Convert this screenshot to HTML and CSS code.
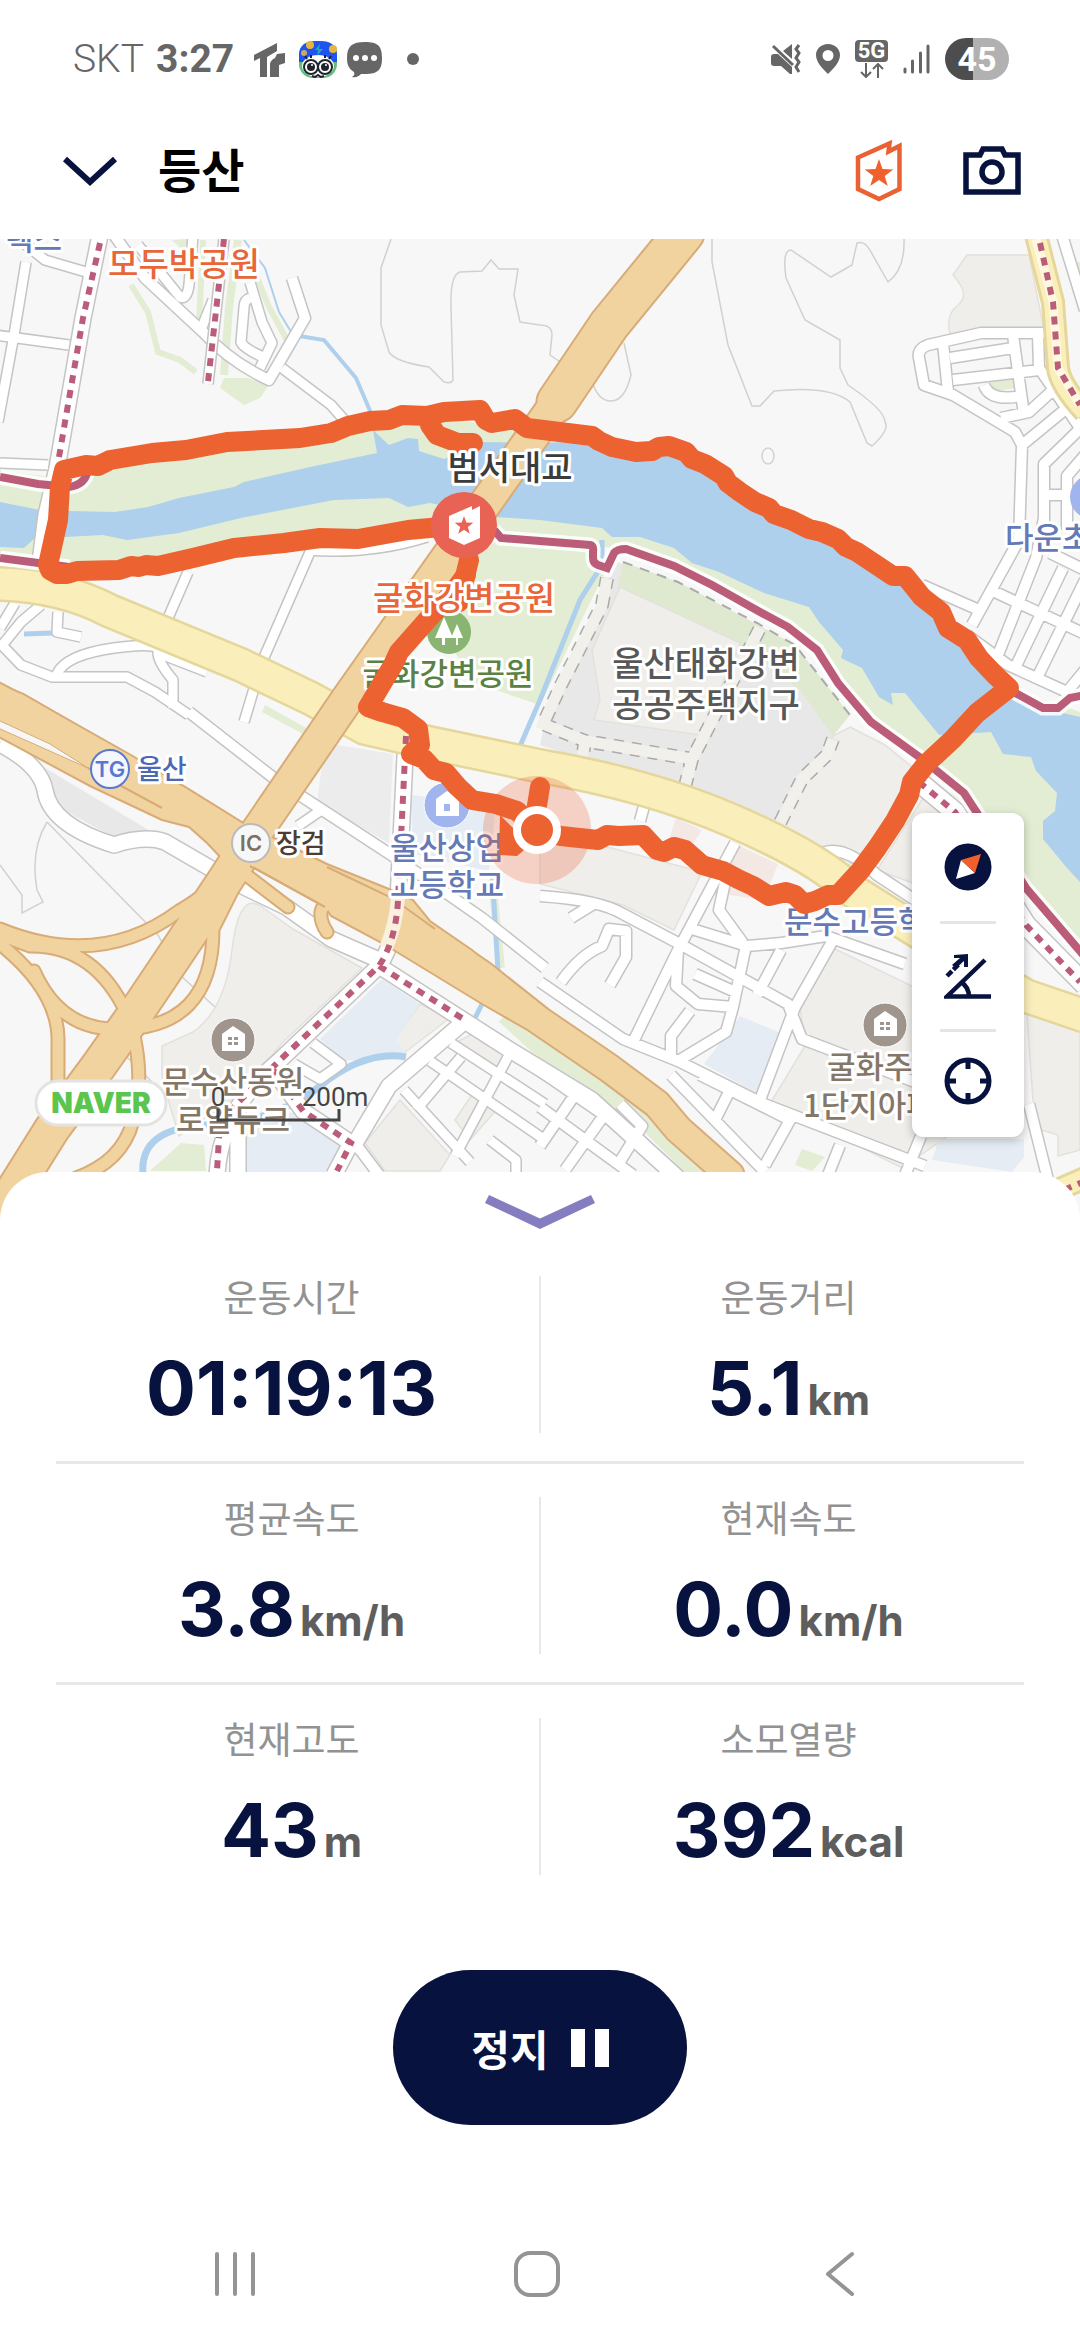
FILE: index.html
```html
<!DOCTYPE html>
<html lang="ko">
<head>
<meta charset="utf-8">
<meta name="viewport" content="width=device-width, initial-scale=1">
<title>등산</title>
<link rel="stylesheet" href="styles.css">
</head>
<body>
<div class="status-bar">
  <div class="status-left">
    <span class="carrier">SKT</span>
    <span class="clock">3:27</span>
    <svg class="app-icon" width="32" height="36" viewBox="0 0 32 36"><path fill="#666" d="M0 14 23 2v8L13 16v20H6V17L0 20zM31 12v10l-6 2v12h-9V24c0-4 3-6 5-7l2-4z"/></svg>
    <svg class="face-icon" width="40" height="38" viewBox="0 0 40 38">
      <rect x="1" y="1" width="38" height="37" rx="14" fill="#62c07a"/>
      <path fill="#1f54ee" d="M1 22V15C1 5 8 1 20 1s19 4 19 14v7z"/>
      <ellipse cx="20" cy="26" rx="16" ry="11" fill="#fff"/>
      <circle cx="12" cy="5" r="4" fill="#e8b53c"/><circle cx="35" cy="9" r="4" fill="#e8b53c"/><circle cx="6" cy="13" r="3" fill="#cda862"/>
      <path d="m22 4-5 6h3l-1 6 6-7h-4z" fill="#27a6b8"/>
      <circle cx="13" cy="27" r="7" fill="#fff" stroke="#20242c" stroke-width="2"/><circle cx="27" cy="27" r="7" fill="#fff" stroke="#20242c" stroke-width="2"/>
      <circle cx="13" cy="27" r="4" fill="#20242c"/><circle cx="27" cy="27" r="4" fill="#20242c"/>
      <circle cx="14" cy="25" r="1" fill="#fff"/><circle cx="28" cy="25" r="1" fill="#fff"/>
      <path d="M14 36l3 1 3-2 3 2 3-1M9 19l-2-3M13 18v-3M27 18v-3M31 19l2-3" stroke="#20242c" stroke-width="2" fill="none"/>
    </svg>
    <svg class="chat-icon" width="36" height="37" viewBox="0 0 36 37"><path fill="#666" d="M18 1c13 0 17 4 17 16s-4 16-17 16h-4c-2 2-5 4-9 3 2-1 3-3 2-5C2 28 0 24 0 17 0 5 5 1 18 1z"/><g fill="#fff"><circle cx="9" cy="17" r="3"/><circle cx="18" cy="17" r="3"/><circle cx="27" cy="17" r="3"/></g></svg>
    <svg class="more-icon" width="12" height="12"><circle cx="6" cy="6" r="6" fill="#666"/></svg>
  </div>
  <div class="status-right">
    <svg width="30" height="32" viewBox="0 0 30 32"><path fill="#666" d="M0 14q0-3 3-3h4l14 13v7h-2l-9-8H3q-3 0-3-3zM12 8l9-7v15z"/><path d="M2 3l20 19M28 2l-3 4 3 4-3 5 3 4-3 5 3 5" fill="none" stroke="#666" stroke-width="3"/></svg>
    <svg width="24" height="32" viewBox="0 0 24 32"><path fill="#666" fill-rule="evenodd" d="M12 1c7 0 12 5 12 11 0 7-6 13-12 19C6 25 0 19 0 12 0 6 5 1 12 1zm0 6a5 5 0 1 0 0 11 5 5 0 0 0 0-11z"/></svg>
    <span class="network"><span class="network-type">5G</span><svg width="24" height="15" viewBox="0 0 24 15"><path d="M6 0v13M1 9l5 5 5-5M18 15V2M13 6l5-5 5 5" fill="none" stroke="#666" stroke-width="2"/></svg></span>
    <svg width="27" height="30" viewBox="0 0 27 30"><path d="M2 25v3M9.500 17v11M17.500 9v19M25 2v26" stroke="#666" stroke-width="3" stroke-linecap="round"/></svg>
    <span class="battery">45</span>
  </div>
</div>

<header class="app-bar">
  <button class="icon-button" type="button" aria-label="접기"><svg width="56" height="32" viewBox="0 0 56 32"><path d="M3 4l25 23L53 4" fill="none" stroke="#07123e" stroke-width="6"/></svg></button>
  <h1>등산</h1>
  <button class="icon-button badge-button" type="button" aria-label="스탬프"><svg width="50" height="64" viewBox="0 0 50 64"><path d="M4 18.500 35.500 4.500 34.500 12.500 45.500 7V50L25 60 4 50z" fill="none" stroke="#ea6233" stroke-width="4.500"/><path fill="#f0602c" d="M25 20l3.500 10.100 10.800.3-8.600 6.500 3.100 10.200L25 41l-8.800 6.100 3.100-10.200-8.600-6.500 10.800-.3z"/></svg></button>
  <button class="icon-button" type="button" aria-label="카메라"><svg width="58" height="50" viewBox="0 0 58 50"><path d="M3 9h14l3-6h19l3 6h13v37H3z" fill="none" stroke="#07123e" stroke-width="5.500"/><circle cx="29" cy="26" r="10" fill="none" stroke="#07123e" stroke-width="5.500"/></svg></button>
</header>

<main>
<section class="map" aria-label="지도">
<svg class="map-canvas" viewBox="0 239 1080 1000" role="img" aria-label="운동 경로 지도">
  <defs>
    <path id="narrow" d="M26 262 14 335-2 422M-5 335 69 345M0 463 48 465M20 240 45 260 86 272M138 245 180 297Q187 300 189 285L193 236M250 282 262 322 272 343 260 368M250 298Q244 300 244 308L241 342Q243 348 265 358M282 368 331 405 346 422M213 300 200 332M188 572 165 625M310 552 262 662 244 722M306 550Q370 555 427 537M0 643 21 665 52 677H127L155 692 189 715M57 674Q65 655 114 648T158 653Q158 662 173 680V708M158 653 207 672M41 605 21 622 0 648M15 603 0 628M58 612 57 632 81 637M298 826 320 811M313 1043 341 1064 320 1079 294 1064M451 1043 545 1104M430 1061 545 1140M404 1090 470 1162M510 1053 455 1156M461 1057 416 1110M490 1140 516 1160V1172"/>
    <path id="medium" d="M114 235 145 278 203 332Q230 362 269 380L305 318 292 278M189 712 275 779 396 858 482 918 545 968M355 1143 379 1175M540 896Q600 900 623 914L678 943 788 1004 802 1039 915 1082M735 843 678 950 633 1042M540 982 623 1039 678 1061 764 1104 925 1166M833 940 795 1007 760 1100M692 929 747 946 781 943 826 936 905 964M678 950 676 986 698 1004 733 1007 745 950M571 918 592 905M561 982Q580 955 602 946L609 929 626 931V957L610 985M733 1007 726 1032 678 1061M690 1011 671 1036V1058M728 868 719 910 743 943M695 974 740 994M647 795 640 821M781 950 757 995M540 1071 640 1140 678 1178M574 1096 540 1146M602 1118 565 1170M540 1107 633 1175M620 1104 642 1126 616 1168M817 856Q840 840 877 875L915 900M671 1075 765 1172M700 1075 790 1120 765 1165M905 1175 921 1136M840 1145 828 1175M730 1090 715 1120M1029 1104 1048 1180M1053 333H981L928 345Q917 349 919 358L924 385 953 395 1015 432 1022 445 1019 540 972 625M943 343 948 392M1013 335 1024 415M950 358 1013 348M953 380 1039 370M1038 335 1039 368 1080 428M1001 418 1029 412 1053 390M984 385Q990 402 1022 396M1022 445 1067 408M1044 530V464L1085 424M1067 530V476L1085 455M1044 495H1067M1044 518 1036 558 998 655M1063 568 1015 668M1085 580 1036 680M995 592 1085 634M1050 553 1085 570M922 585 979 610M967 635 1008 665 1067 692 1085 670M1062 235 1085 310"/>
    <path id="wide" d="M100 235 83 318 65 422 57 468 46 515 38 578M0 744Q40 765 45 790Q50 825 114 845Q145 835 165 842L234 882 286 907 331 939 379 960M406 736 398 900Q396 940 379 966L279 1061Q220 1110 217 1175M238 1110V1175M379 966 510 1050 592 1100 678 1178M272 1068 303 1111 351 1143 334 1175M465 1021 389 1086 351 1150"/>
    <path id="eastroad" d="M919 782 955 812 1026 925 1085 985"/>
    <path id="lane" d="M607 578 602 605 561 685 543 724 585 741 692 759 760 628M692 759 684 790M585 741 582 760M833 739 827 755 802 779 779 825"/>
    <path id="yellow" d="M-5 584Q60 585 110 611L241 665 310 698 365 728 430 743 540 766Q650 785 733 821T850 889Q930 940 1026 996L1085 1016"/>
    <path id="yellowside" d="M1036 235 1053 302 1058 368Q1060 385 1085 412M1046 1195 1085 1178"/>
    <path id="highway" d="M-8 697 17 707 103 757 179 800 248 843 310 875 413 928 482 975 540 1021 609 1068 657 1104 678 1129 730 1175"/>
    <path id="ramps" d="M0 929Q100 970 179 911Q215 890 213 879M0 935 30 946Q95 945 127 1014M-5 940Q60 990 58 1043V1090M34 971Q60 1030 117 1029Q213 1030 213 929L231 893M134 1036Q144 1080 133 1121T76 1178M241 871 288 907M354 911Q325 895 321 912Q320 922 327 932"/>
    <path id="river" d="M0 502 40 510 69 511 115 512 148 507 179 498 234 487 244 482 310 467 377 453 373 430 389 445 408 438 418 439 419 451 444 459 482 442 540 443 600 441 670 452 724 476 774 514 838 539 893 576 948 628 1009 688 1050 710 1080 717V882L1067 868 1043 839V821L1055 811 1057 793 1036 771 1031 757 1003 754 991 732 939 735 905 693 891 693 893 705 879 697 862 668 841 658 843 650 819 622 809 607 764 593 719 572 692 563 674 548 640 537 612 537 602 528 540 520 496 517 430 503 408 507 389 498 334 500 241 518 179 533 127 540 103 535 65 537 36 537 24 548 0 547z"/>
    <path id="bikeway" d="M0 477 38 484 69 487Q85 485 88 470M0 558 69 567M494 530 501 538 540 541 590 545Q594 546 593 552V558Q593 563 598 565L607 568 614 553Q617 549 626 549L674 566 712 585 760 612 788 627 817 650 838 683 871 722 922 759 964 793 1026 888 1085 957M1010 690 1043 708H1058L1070 698 1085 695"/>
    <path id="trail" d="M464 525 430 528 408 530 358 539 320 538 284 543 234 548 193 558 158 566 146 565 139 567 131 566 119 570 77 571 67 574 57 574 50 570 48 565 58 520 60 487 64 470 86 465 98 466 110 460 152 453 186 450 227 442 300 438 331 433 348 426 370 421 389 420 402 415 427 416 444 412 480 410 486 420 492 423 515 419 527 428 592 436 599 441 612 447 636 452 652 451 659 447 669 446 686 452 692 459 705 464 724 476 728 483 740 492 755 502 769 508 774 514 791 520 809 529 822 532 838 539 846 547 857 552 893 576 905 576 914 587 922 597 941 612 948 628 967 640 979 658 995 675 1009 688 977 713 953 739 926 764 912 782 909 795 895 821 877 848 860 871 838 895 828 895 815 901 804 904 795 895 786 892 769 896 753 886 738 879 723 871 702 865 685 850 674 847 664 852 657 850 643 835 619 836 607 835 598 840 561 836 537 830 517 811 496 804 472 800 458 787 446 773 434 770 424 759 411 754 420 745 418 729 403 718 382 712 368 707 393 665 399 652 429 618 455 590 466 575"/>
  </defs>

  <rect y="239" width="1080" height="1000" fill="#f7f7f7"/>

  <!-- parks and river banks -->
  <g fill="#e2edd4">
    <path d="M0 470 57 478 110 460 227 442 348 426 430 416 490 425 600 441 1009 688 1080 712V952L976 816 871 715 817 650 760 612 626 549 540 541 464 525 358 539 234 548 60 570 0 560z"/>
    <path d="M500 538 593 546 607 568 540 705 475 683 420 600z"/>
    <path d="M220 388 224 378 248 378 269 385 260 398 244 405zM989 380 1015 377 1016 388 995 391zM265 705 310 730 305 735 262 712zM735 960 747 945 754 950 744 965zM181 1143 204 1145 206 1171 150 1171zM802 1149 825 1157 812 1171 795 1165zM1068 265 1080 262V290zM172 240 187 239 185 252z"/>
  </g>
  <g fill="none" stroke="#e2edd4">
    <path d="M203 240 199 325M131 285 148 312 158 352 180 360 196 372M255 272 268 305 288 342" stroke-width="6"/>
    <path d="M238 240 229 308 224 375" stroke-width="8"/>
    <path d="M505 1015 540 1047 600 1090 650 1125 705 1180" stroke-width="18"/>
    <path d="M492 880 501 968" stroke-width="8"/>
  </g>

  <!-- housing, schools and other lots -->
  <path fill="#e8e8e8" d="M617 562 680 583 795 645 835 738 775 825 690 793 540 745 550 700zM45 768 152 832 117 839 58 807z"/>
  <path fill="#dfe9cf" d="M623 562 678 582 795 645 850 715 833 736 800 690 740 645 617 590z"/>
  <path fill="#ececec" d="M325 743 393 754 389 843 317 802z"/>
  <g fill="#efeeea" stroke="#e3e1db" stroke-width="1.500">
    <path d="M620 587 740 643 700 735 594 720 600 700 592 650z"/>
    <path d="M850 727 885 745 922 775 905 810 846 868 779 825 833 736z"/>
    <path d="M967 255 1029 255 1044 330 950 334Q945 315 958 305T953 275z"/>
    <path d="M262 907 293 929 362 968 282 1043 241 1093 179 1136 162 1079V1046L193 1032Q225 1010 232 950T262 907z"/>
    <path d="M540 845 600 845 702 872 674 930 623 905 540 884zM833 948 912 986 1000 1100 902 1168 771 1102 805 1046 800 1007zM1026 1003 1080 1030V1150L1058 1156V1135L1035 1128zM877 870 925 795 960 830V900z"/>
    <path d="M420 1004 450 1018 400 1056 395 1039zM455 1043 480 1030 510 1055 498 1070zM455 1120 475 1090 500 1106 470 1140zM365 1143 400 1100 450 1155 440 1171H385z"/>
  </g>
  <path fill="#e5ecf3" d="M411 795 496 804 489 871 413 854zM382 979 420 1004 396 1039 406 1054 344 1061 320 1039zM244 1121 300 1111 341 1146 334 1175H244zM740 1016 790 1037 760 1095 704 1064zM939 1139H1024V1157L1012 1172 932 1160z"/>
  <path fill="#f3e8e3" d="M676 818 702 830 690 848 668 842zM733 843 778 864 764 900 716 893z"/>

  <use href="#river" fill="#aed0ec"/>
  <g fill="none" stroke="#aed0ec">
    <path d="M244 240 265 268 279 312 293 335" stroke-width="2"/>
    <path d="M293 335 324 340 356 378 374 420" stroke-width="4"/>
    <path d="M602 540V565L580 600 540 700 520 746M492 871 498 971M484 1000 475 1018M24 634 52 633" stroke-width="5"/>
    <path d="M406 1057Q365 1050 320 1086T207 1125 143 1174" stroke-width="7"/>
  </g>

  <!-- contour lines -->
  <path fill="none" stroke="#d3d1cc" stroke-width="1.500" d="M391 239 381 268V325L389 352Q395 362 429 367L444 382Q452 384 453 380L451 307Q450 275 460 272L482 271 491 260 499 269 518 269 514 295 520 322 540 325Q552 325 552 335L550 355 566 366M712 239V262L728 345 752 406H760L774 391Q830 385 850 402L867 443 872 446Q890 430 885 422 885 410 848 385L840 368V340L805 320 786 278Q782 250 791 250L831 277 852 265 857 243Q865 240 871 252L888 282Q905 270 904 239M624 343 631 375Q625 400 612 401T592 382M47 822Q30 850 37 890L43 902 22 913V895L0 865M47 822 158 935 180 975 215 1007M90 1020 160 1090"/>
  <ellipse cx="768" cy="456" rx="6" ry="8" fill="none" stroke="#d3d1cc" stroke-width="1.500"/>

  <!-- streets -->
  <use class="casing w12" href="#narrow"/><use class="casing w13" href="#medium"/><use class="casing w18" href="#wide"/><use class="casing w22" href="#eastroad"/>
  <use class="fill w9" href="#narrow"/><use class="fill w10" href="#medium"/><use class="fill w15" href="#wide"/><use class="fill w19" href="#eastroad"/>
  <path class="casing w12" d="M224 239 217 302 208 384"/><path class="fill w9" d="M224 239 217 302 208 384"/>
  <use href="#lane" fill="none" stroke="#aaa" stroke-width="14" stroke-dasharray="10 8"/>
  <use href="#lane" fill="none" stroke="#f1f0ea" stroke-width="11"/>
  <path d="M623 562 678 582 757 623 795 645 850 715" fill="none" stroke="#aaa" stroke-width="2" stroke-dasharray="10 8"/>

  <!-- main roads -->
  <use class="yellow-edge w36" href="#yellow"/><use class="yellow-fill w31" href="#yellow"/>
  <use class="yellow-edge w24" href="#yellowside"/><use class="yellow-fill w18" href="#yellowside"/>
  <path d="M1036 239 1053 302 1058 368 1080 405" fill="none" stroke="#fff8e0" stroke-width="9"/>
  <path class="highway-edge" stroke-width="43" d="M684 233 609 325 557 402"/>
  <path class="highway-edge" stroke-width="35" d="M557 402 350 695 251 840"/>
  <path class="highway-edge" stroke-width="38" d="M251 840 224 882 138 1010 100 1064 52 1129 0 1212"/>
  <use class="highway-edge" stroke-width="15" href="#ramps"/>
  <use class="highway-edge" stroke-width="31" href="#highway"/>
  <path fill="#f1d39f" stroke="#d8ab77" stroke-width="2" d="M-3 681 33 700 131 755 243 823 272 837 327 864 389 889 413 900 430 921 472 950 496 970 513 982 518 996 545 1012V1040L482 1004 382 943 331 916 325 907 251 866 241 879 207 843 189 827 162 820 90 786-3 736z"/>
  <path class="highway-fill" stroke-width="39" d="M684 233 609 325 557 402"/>
  <path class="highway-fill" stroke-width="31" d="M557 402 350 695 251 840"/>
  <path class="highway-fill" stroke-width="34" d="M251 840 224 882 138 1010 100 1064 52 1129 0 1212"/>
  <use class="highway-fill" stroke-width="11" href="#ramps"/>
  <use class="highway-fill" stroke-width="27" href="#highway"/>
  <path fill="#f7f7f7" stroke="#d8ab77" d="M-2 720 50 744 88 768-2 728z"/>
  <path fill="none" stroke="#d8ab77" stroke-width="2" d="M88 768 162 808M327 867 392 898 435 929M250 866 325 907"/>
  <path fill="none" stroke="#faf0de" stroke-width="14" d="M398 898Q396 925 386 948"/>

  <!-- bicycle roads -->
  <use href="#bikeway" fill="none" stroke="#fff" stroke-opacity=".85" stroke-width="15"/>
  <use href="#bikeway" fill="none" stroke="#bb5c78" stroke-width="8"/>
  <path fill="none" stroke="#bb5c78" stroke-width="6" stroke-dasharray="8 7" d="M100 243 83 318 65 422 58 463M224 239 217 302 208 382M406 736 398 900Q396 940 379 966L279 1061 220 1121 217 1171M379 966 465 1020M272 1068 303 1111 351 1143 337 1171M1040 243 1053 302 1058 368 1080 405M919 782 955 812 1026 925 1080 982M1064 1190 1085 1181"/>

  <!-- places under the trail -->
  <circle cx="449" cy="632" r="22" fill="#89b471"/><path fill="#fff" d="M444 617l-9 21h7v7h3v-7h8zM457 624l-6 14h5v7h2v-7h5z"/>
  <circle cx="447" cy="805" r="23" fill="#a0b4ee" stroke="#fff"/><path fill="#fff" fill-rule="evenodd" d="M436 816V799l11-8 12 8v17zM444 804v7h6v-7z"/>
  <circle cx="1092" cy="497" r="22" fill="#a0b4ee"/>
  <g class="place">
    <text class="t31 park" x="448" y="685" text-anchor="middle">굴화강변공원</text>
    <text class="t31 school" x="447" y="859" text-anchor="middle">울산상업</text>
    <text class="t31 school" x="447" y="896" text-anchor="middle">고등학교</text>
    <text class="t31 school" x="784" y="933">문수고등학교</text>
  </g>

  <circle cx="537" cy="830" r="54" fill="#ea6038" opacity=".26"/>
  <use href="#trail" fill="none" stroke="#ec6231" stroke-width="20" stroke-linejoin="round" stroke-linecap="round"/>
  <path d="M430 425 437 435 458 443 473 443M540 787 533 830M469 560 463 585 459 602" fill="none" stroke="#ec6231" stroke-width="20" stroke-linejoin="round" stroke-linecap="round"/>
  <path fill="#ec6231" d="M500 815 499 855 517 856 530 845z"/>
  <circle cx="537" cy="830" r="20" fill="#ec6231" stroke="#fff" stroke-width="8"/>
  <circle cx="464" cy="525" r="33" fill="#e86354"/>
  <path fill="#fff" d="M449 516 472 506V510L480 506V538L464 545 449 538z"/>
  <path fill="#e86354" d="M464 516l2.300 6.500 7 .2-5.500 4.300 2 6.800-5.800-4-5.800 4 2-6.800-5.500-4.300 7-.2z"/>

  <!-- place names -->
  <circle cx="110" cy="769" r="19" fill="#f4f7fc" stroke="#5b78cf" stroke-width="2"/>
  <text class="t22 gate" x="110" y="777" text-anchor="middle">TG</text>
  <circle cx="251" cy="843" r="19" fill="#f7f7f7" stroke="#bbb" stroke-width="2"/>
  <text class="t22 junction" x="251" y="851" text-anchor="middle">IC</text>
  <g id="apartment"><circle cx="233" cy="1040" r="22" fill="#9f958c" stroke="#fff"/><path fill="#fff" d="M222 1051V1034l11-8 12 8v17z"/><path fill="#9f958c" d="M228 1037h4v3h-4zM234 1037h4v3h-4zM228 1042h4v3h-4zM234 1042h4v3h-4z"/></g>
  <use href="#apartment" x="652" y="-15"/>
  <g class="place">
    <text class="t31 school" x="62" y="250" text-anchor="end">렉스</text>
    <text class="t33 course" x="184" y="276" text-anchor="middle">모두박공원</text>
    <text class="t34 bridge" x="510" y="480" text-anchor="middle">범서대교</text>
    <text class="t33 course" x="464" y="610" text-anchor="middle">굴화강변공원</text>
    <text class="t34 area" x="706" y="676" text-anchor="middle">울산태화강변</text>
    <text class="t34 area" x="706" y="717" text-anchor="middle">공공주택지구</text>
    <text class="t31 school" x="1005" y="549">다운초등학교</text>
    <text class="t27 toll" x="137" y="779">울산</text>
    <text class="t27 exit" x="276" y="853">장검</text>
    <text class="t31 home" x="233" y="1093" text-anchor="middle">문수산동원</text>
    <text class="t31 home" x="233" y="1131" text-anchor="middle">로얄듀크</text>
    <text class="t31 home" x="827" y="1078">굴화주공</text>
    <text class="t31 home" x="803" y="1117">1단지아파트</text>
  </g>

  <rect x="36" y="1081" width="130" height="44" rx="22" fill="#fff" stroke="#e3e3e3" stroke-width="3"/>
  <text class="naver" x="101" y="1113" text-anchor="middle">NAVER</text>
  <path d="M218 1109V1120H339V1109" fill="none" stroke="#444" stroke-width="3"/>
  <text class="scale" x="218" y="1106" text-anchor="middle">0</text>
  <text class="scale" x="335" y="1106" text-anchor="middle">200m</text>
</svg>

<div class="map-tools">
  <button type="button" aria-label="나침반"><svg width="48" height="48" viewBox="0 0 48 48"><circle cx="24" cy="24" r="23.500" fill="#07123e"/><path d="M17 17 31 30 12 36z" fill="#fff"/><path d="M17 17 37 11 31 30z" fill="#f0602c"/></svg></button>
  <button type="button" aria-label="경사도"><svg width="48" height="48" viewBox="0 0 48 48"><path d="M47 43.500H3L41 7M17 29q8 5 8 15" fill="none" stroke="#07123e" stroke-width="4.500"/><path d="M3 23l13-13" fill="none" stroke="#07123e" stroke-width="4.500" stroke-dasharray="7 2"/><path d="M10 2 24 1V14H20V8L12 15 8 12 16 5H10z" fill="#07123e"/></svg></button>
  <button type="button" aria-label="현재 위치"><svg width="48" height="48" viewBox="0 0 48 48"><circle cx="24" cy="24" r="21" fill="none" stroke="#07123e" stroke-width="5"/><path d="M24 2v10M24 46V36M2 24h10M46 24H36" stroke="#07123e" stroke-width="5"/></svg></button>
</div>
</section>

<section class="sheet">
  <button class="handle" type="button" aria-label="기록 접기"><svg width="110" height="34" viewBox="0 0 110 34"><path fill="#847ec0" d="M4 0 55 23.500 106 0 110 8 55 34 0 8z"/></svg></button>
  <dl class="stats">
    <div class="row">
      <div class="stat"><dt>운동시간</dt><dd>01:19:13</dd></div>
      <div class="stat"><dt>운동거리</dt><dd>5.1<small>km</small></dd></div>
    </div>
    <div class="row">
      <div class="stat"><dt>평균속도</dt><dd>3.8<small>km/h</small></dd></div>
      <div class="stat"><dt>현재속도</dt><dd>0.0<small>km/h</small></dd></div>
    </div>
    <div class="row">
      <div class="stat"><dt>현재고도</dt><dd>43<small>m</small></dd></div>
      <div class="stat"><dt>소모열량</dt><dd>392<small>kcal</small></dd></div>
    </div>
  </dl>
  <button class="stop" type="button">정지<svg width="38" height="38" viewBox="0 0 38 38"><path fill="#fff" d="M0 0h14v38H0zM24 0h14v38H24z"/></svg></button>
</section>
</main>

<nav class="nav-bar">
  <button type="button" aria-label="최근 앱"><svg width="46" height="46" viewBox="0 0 46 46"><path d="M5 3v40M23 3v40M41 3v40" stroke="#949494" stroke-width="4" stroke-linecap="round"/></svg></button>
  <button type="button" aria-label="홈"><svg width="46" height="46" viewBox="0 0 46 46"><rect x="2" y="2" width="42" height="42" rx="14" fill="none" stroke="#949494" stroke-width="4"/></svg></button>
  <button type="button" aria-label="뒤로"><svg width="46" height="46" viewBox="0 0 46 46"><path d="M35 3 11 23l24 20" fill="none" stroke="#949494" stroke-width="4" stroke-linecap="round" stroke-linejoin="round"/></svg></button>
</nav>
</body>
</html>
```
FILE: styles.css
```css
* { box-sizing: border-box; }
body {
  margin: 0;
  min-height: 100vh;
  display: flex;
  flex-direction: column;
  background: #fff;
  font-family: "Noto Sans CJK KR", sans-serif;
}
button {
  border: 0;
  padding: 0;
  background: none;
  font: inherit;
  display: flex;
  align-items: center;
  justify-content: center;
}
svg { display: block; flex: none; }
main { flex: 1; display: flex; flex-direction: column; }

/* status bar */
.status-bar {
  height: 118px;
  padding: 0 71px 0 73px;
  display: flex;
  align-items: center;
  justify-content: space-between;
  font-family: Roboto, sans-serif;
  font-size: 39px;
  line-height: 44px;
  color: #666;
}
.status-left, .status-right { display: flex; align-items: center; }
.status-right { gap: 15px; }
.carrier { font-weight: 300; margin-right: 12px; }
.clock { font-weight: 700; margin-right: 20px; }
.app-icon { margin-right: 12px; }
.face-icon { margin-right: 9px; }
.chat-icon { margin-right: 24px; }
.network { display: flex; flex-direction: column; align-items: center; gap: 1px; }
.network-type {
  width: 33px;
  border-radius: 4px;
  background: #666;
  color: #fff;
  font-size: 22px;
  line-height: 22px;
  font-weight: 700;
  text-align: center;
}
.battery {
  width: 64px;
  height: 42px;
  border-radius: 21px;
  background: linear-gradient(90deg, #4d4d4d 44%, #b1b1b1 44%);
  color: #fff;
  font-size: 34px;
  line-height: 42px;
  font-weight: 700;
  text-align: center;
}

/* title bar */
.app-bar {
  height: 121px;
  padding: 0 59px 16px 62px;
  display: flex;
  align-items: center;
}
.app-bar h1 {
  flex: 1;
  margin: 0 0 0 40px;
  padding-bottom: 6px;
  font-size: 47px;
  line-height: 60px;
  font-weight: 700;
  color: #000;
}
.badge-button { margin-right: 59px; }

/* map */
.map { position: relative; overflow: hidden; }
.map-canvas { width: 100%; height: auto; }
.casing, .fill { fill: none; stroke-linejoin: round; }
.casing { stroke: #c4c4c4; }
.fill { stroke: #fff; }
.w9 { stroke-width: 9px; }
.w10 { stroke-width: 10px; }
.w12 { stroke-width: 12px; }
.w13 { stroke-width: 13px; }
.w15 { stroke-width: 15px; }
.w18 { stroke-width: 18px; }
.w19 { stroke-width: 19px; }
.w22 { stroke-width: 22px; }
.w24 { stroke-width: 24px; }
.w31 { stroke-width: 31px; }
.w36 { stroke-width: 36px; }
.yellow-edge { fill: none; stroke: #e5d79b; }
.yellow-fill { fill: none; stroke: #faeebb; }
.highway-edge { fill: none; stroke: #d8ab77; stroke-linecap: round; }
.highway-fill { fill: none; stroke: #f1d39f; stroke-linecap: round; }
.place text {
  font-weight: 500;
  stroke: #fff;
  stroke-width: 6px;
  stroke-linejoin: round;
  paint-order: stroke;
}
.t22 { font-size: 22px; font-family: Inter, sans-serif; font-weight: 600; }
.t27 { font-size: 27px; }
.t31 { font-size: 31px; }
.t33 { font-size: 33px; }
.t34 { font-size: 34px; }
.course { fill: #e8663a; }
.bridge { fill: #3c3c3c; }
.area { fill: #585858; }
.park { fill: #5a8245; }
.school { fill: #6479b5; }
.toll { fill: #4a67b8; }
.exit { fill: #4f3c30; }
.home { fill: #857768; }
.gate { fill: #5b78cf; }
.junction { fill: #7c7062; }
.naver { font-family: Inter, sans-serif; font-size: 28px; font-weight: 900; fill: #5cc54f; }
.scale { font-family: Roboto, sans-serif; font-size: 26px; fill: #444; }

.map-tools {
  position: absolute;
  right: 56px;
  bottom: 102px;
  width: 112px;
  border-radius: 12px;
  background: #fff;
  box-shadow: 0 3px 10px rgba(0, 0, 0, .25);
}
.map-tools button {
  width: 56px;
  height: 108px;
  margin: 0 auto;
}
.map-tools button + button { border-top: 3px solid #e5e5e5; }
.map-tools button:last-child { padding-bottom: 8px; }

/* workout sheet */
.sheet {
  position: relative;
  flex: 1;
  margin-top: -67px;
  border-radius: 48px 48px 0 0;
  background: #fff;
  display: flex;
  flex-direction: column;
  align-items: center;
}
.handle { width: 200px; height: 71px; padding-top: 9px; }
.stats { width: 100%; margin: 0; padding: 0 56px; }
.row {
  display: flex;
  padding: 33px 0 28px;
}
.row + .row { border-top: 3px solid #e8e8e8; }
.stat {
  flex: 1;
  display: flex;
  flex-direction: column;
  align-items: center;
  gap: 27px;
  padding-right: 12px;
}
.stat + .stat { border-left: 2px solid #e8e8e8; padding: 0 0 0 12px; }
.stat dt { font-size: 37px; line-height: 40px; color: #929292; }
.stat dd {
  margin: 0;
  display: flex;
  align-items: baseline;
  gap: 5px;
  font-family: Inter, sans-serif;
  font-size: 74px;
  line-height: 90px;
  font-weight: 700;
  color: #07123e;
}
.stat small { font-size: 42px; line-height: 48px; font-weight: 700; color: #5e5e5e; }
.stop {
  width: 294px;
  height: 155px;
  margin-top: 67px;
  border-radius: 78px;
  background: #07123e;
  color: #fff;
  font-size: 42px;
  line-height: 60px;
  font-weight: 700;
  gap: 22px;
}

/* system navigation */
.nav-bar {
  height: 132px;
  padding: 0 89px 0 84px;
  display: grid;
  grid-template-columns: repeat(3, 1fr);
}
```
